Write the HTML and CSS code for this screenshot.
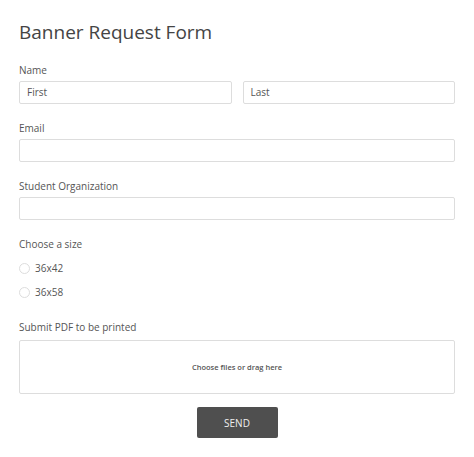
FILE: index.html
```html
<!DOCTYPE html>
<html>
<head>
<meta charset="utf-8">
<link rel="stylesheet" href="styles.css">
</head>
<body>
<form class="form">
  <h1 class="title">Banner Request Form</h1>
  <div class="field">
    <label class="label">Name</label>
    <div class="row">
      <div class="input">First</div>
      <div class="input">Last</div>
    </div>
  </div>
  <div class="field">
    <label class="label">Email</label>
    <div class="input"></div>
  </div>
  <div class="field">
    <label class="label">Student Organization</label>
    <div class="input"></div>
  </div>
  <div class="field field-radios">
    <label class="label">Choose a size</label>
    <div class="radios">
      <div class="radio"><span class="circle"></span>36x42</div>
      <div class="radio"><span class="circle"></span>36x58</div>
    </div>
  </div>
  <div class="field field-drop">
    <label class="label">Submit PDF to be printed</label>
    <div class="drop">Choose files or drag here</div>
  </div>
  <div class="actions">
    <div class="send">SEND</div>
  </div>
</form>
</body>
</html>
```
FILE: styles.css
```css
* { box-sizing: border-box; }
html, body { margin: 0; padding: 0; background: #fff; }
body { font-family: "Open Sans", "Noto Sans", sans-serif; color: #555; }
.form { padding: 19px 19px 0 19px; display: flex; flex-direction: column; }
.title { margin: 0 0 17px 0; font-size: 19px; font-weight: 400; line-height: 27px; color: #444; }
.field { display: flex; flex-direction: column; margin-bottom: 17px; }
.label { font-size: 10px; line-height: 14px; margin-bottom: 4px; color: #555; }
.row { display: flex; gap: 11px; }
.row .input { flex: 1; }
.input { height: 23px; border: 1px solid #ddd; border-radius: 2px; font-size: 10px; line-height: 21px; padding: 0 7px; color: #555; }
.field-radios { margin-bottom: 21px; }
.radios { display: flex; flex-direction: column; gap: 10px; padding-top: 6px; }
.radio { display: flex; align-items: center; gap: 5px; font-size: 10px; line-height: 14px; color: #555; }
.circle { width: 11px; height: 11px; border: 1px solid #ddd; border-radius: 50%; }
.field-drop { margin-bottom: 13px; }
.drop { margin-top: 2px; height: 54px; border: 1px solid #ddd; border-radius: 2px; display: flex; align-items: center; justify-content: center; font-size: 7.5px; font-weight: 600; color: #555; }
.actions { display: flex; justify-content: center; }
.send { width: 81px; height: 31px; background: #4f4f4f; color: #eee; border-radius: 2px; display: flex; align-items: center; justify-content: center; font-size: 10px; }
```
